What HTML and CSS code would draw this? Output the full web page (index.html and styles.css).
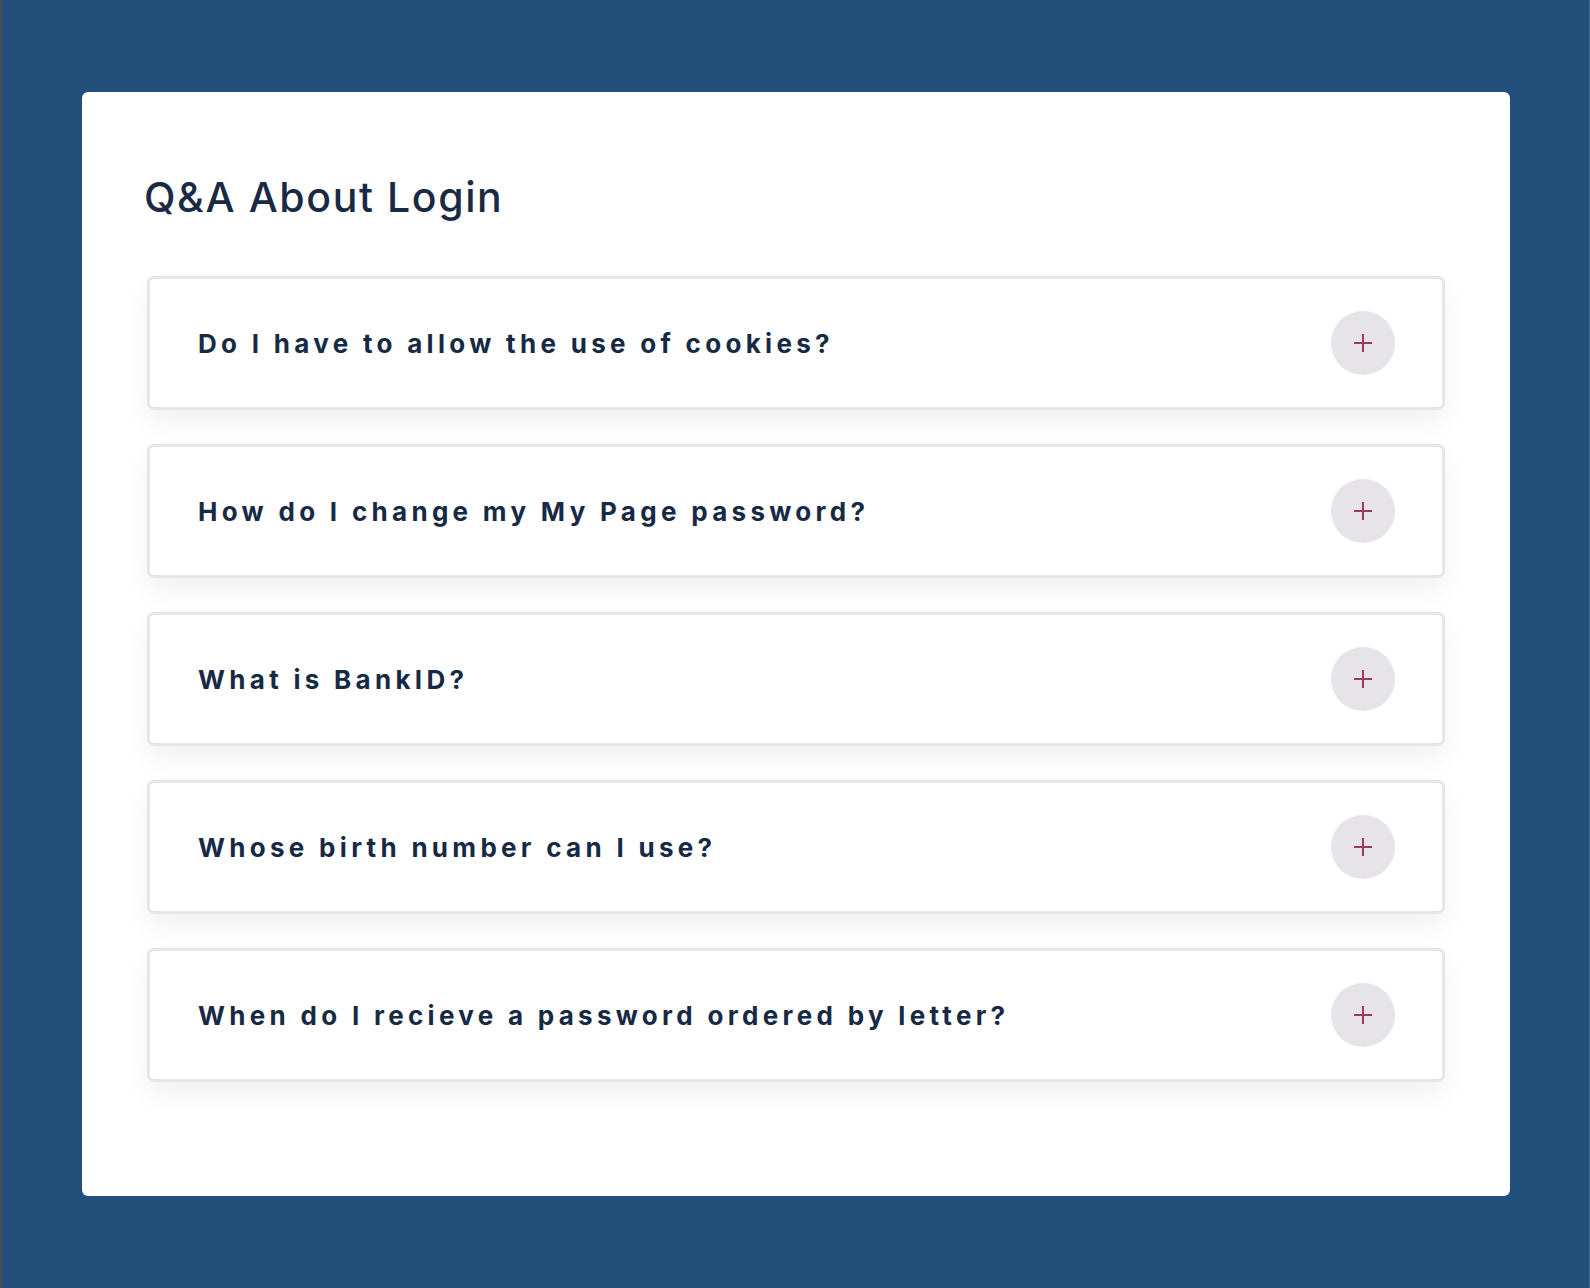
FILE: index.html
```html
<!DOCTYPE html>
<html lang="en">
<head>
<meta charset="utf-8">
<title>Q&amp;A About Login</title>
<link rel="stylesheet" href="styles.css">
</head>
<body>
<main class="frame">
  <section class="card">
    <h1 class="title">Q&amp;A About Login</h1>
    <div class="faq">
      <div class="item">
        <span class="question">Do I have to allow the use of cookies?</span>
        <span class="toggle"><svg viewBox="0 0 20 20" width="20" height="20"><path d="M10 1v18M1 10h18" stroke="#a3385c" stroke-width="2" fill="none"/></svg></span>
      </div>
      <div class="item">
        <span class="question">How do I change my My Page password?</span>
        <span class="toggle"><svg viewBox="0 0 20 20" width="20" height="20"><path d="M10 1v18M1 10h18" stroke="#a3385c" stroke-width="2" fill="none"/></svg></span>
      </div>
      <div class="item">
        <span class="question">What is BankID?</span>
        <span class="toggle"><svg viewBox="0 0 20 20" width="20" height="20"><path d="M10 1v18M1 10h18" stroke="#a3385c" stroke-width="2" fill="none"/></svg></span>
      </div>
      <div class="item">
        <span class="question">Whose birth number can I use?</span>
        <span class="toggle"><svg viewBox="0 0 20 20" width="20" height="20"><path d="M10 1v18M1 10h18" stroke="#a3385c" stroke-width="2" fill="none"/></svg></span>
      </div>
      <div class="item">
        <span class="question">When do I recieve a password ordered by letter?</span>
        <span class="toggle"><svg viewBox="0 0 20 20" width="20" height="20"><path d="M10 1v18M1 10h18" stroke="#a3385c" stroke-width="2" fill="none"/></svg></span>
      </div>
    </div>
  </section>
</main>
</body>
</html>
```

FILE: styles.css
```css
* { box-sizing: border-box; }

html, body {
  margin: 0;
  padding: 0;
}

body {
  background: #23507a;
  font-family: Inter, "Noto Sans", "Liberation Sans", sans-serif;
  color: #172a45;
}

.frame {
  min-height: 1288px;
  border-left: 2px solid #4c4c4c;
  border-right: 1px solid #3b6a93;
  padding: 92px 79px 92px 80px;
}

.card {
  background: #ffffff;
  border-radius: 6px;
  padding: 80px 65px 114px 65px;
}

.title {
  margin: 0 0 54px -3px;
  font-size: 41px;
  line-height: 50px;
  font-weight: 500;
  letter-spacing: 1.6px;
  color: #1a2a44;
}

.faq {
  display: flex;
  flex-direction: column;
  gap: 34px;
}

.item {
  display: flex;
  align-items: center;
  justify-content: space-between;
  height: 134px;
  padding: 0 47px 0 48px;
  border: 3px solid #e7e5eb;
  border-radius: 7px;
  background: #ffffff;
  box-shadow: 0 12px 24px rgba(20, 20, 40, 0.06);
}

.question {
  font-size: 26px;
  font-weight: 700;
  letter-spacing: 4.3px;
  color: #172a45;
}

.toggle {
  width: 64px;
  height: 64px;
  border-radius: 50%;
  background: #e6e3e9;
  display: flex;
  align-items: center;
  justify-content: center;
}
```
